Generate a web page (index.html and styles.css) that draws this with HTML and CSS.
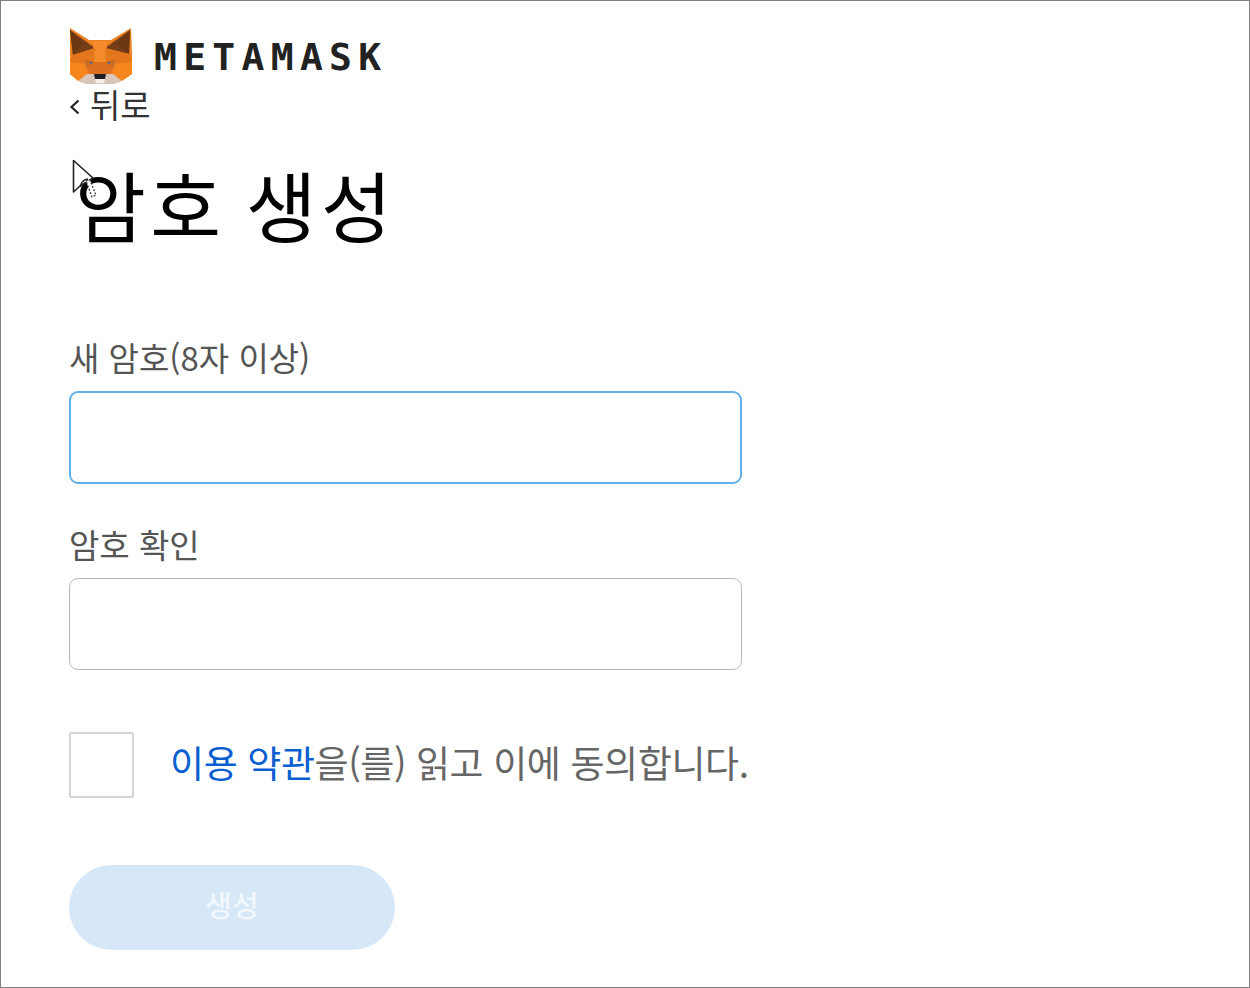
FILE: index.html
```html
<!DOCTYPE html>
<html lang="ko">
<head>
<meta charset="utf-8">
<title>MetaMask</title>
<link rel="stylesheet" href="styles.css">
</head>
<body>
<div class="page">
  <header class="brand">
    <svg class="fox" viewBox="0 0 64 56" aria-hidden="true">
      <polygon points="1,0 20,12 42,12 62,0 63,26 63,46 52,53 44,56 18,56 10,53 1,46 1,26" fill="#ec8023"/>
      <polygon points="1,2 26,20 4,27" fill="#763d16"/>
      <polygon points="61,2 36,20 60,26" fill="#763d16"/>
      <polygon points="1,2 14,15 4,27" fill="#6b3712"/>
      <polygon points="61,2 48,15 60,26" fill="#6b3712"/>
      <polygon points="24,13 38,13 37,34 25,34" fill="#f48c2b"/>
      <polygon points="4,27 26,20 25,34 15,36 1,34" fill="#e4761b"/>
      <polygon points="60,26 36,20 37,34 47,36 63,34" fill="#e4761b"/>
      <polygon points="1,34 15,36 18,46 9,53 1,46" fill="#f6851b"/>
      <polygon points="63,34 47,36 44,46 53,53 63,46" fill="#f6851b"/>
      <polygon points="15,31 25,34 24,40 18,40" fill="#c86a24"/>
      <polygon points="47,31 37,34 38,40 44,40" fill="#c86a24"/>
      <polygon points="20,34 26,35 23,37" fill="#3f6d92"/>
      <polygon points="42,34 36,35 39,37" fill="#3f6d92"/>
      <polygon points="18,40 25,34 37,34 44,40 41,47 21,47" fill="#dc6f1d"/>
      <polygon points="9,53 18,46 44,46 53,53 44,56 18,56" fill="#d9c6b6"/>
      <polygon points="25,46 37,46 36,51 26,51" fill="#1f1f25"/>
      <polygon points="26,51 36,51 35,55 27,55" fill="#f4efe9"/>
    </svg>
    <span class="wordmark">METAMASK</span>
  </header>
  <a class="back" href="#"><svg class="chev" viewBox="0 0 11 18" aria-hidden="true"><path d="M9.500 2.500 L2.500 9 L9.500 15.500" fill="none" stroke="#222" stroke-width="2.200"/></svg><span>뒤로</span></a>
  <h1 class="title">암호 생성</h1>
  <form class="form">
    <label class="field">
      <span class="field-label">새 암호(8자 이상)</span>
      <span class="input input-focus"></span>
    </label>
    <label class="field">
      <span class="field-label">암호 확인</span>
      <span class="input"></span>
    </label>
    <div class="terms">
      <span class="check"></span>
      <span class="terms-text"><a href="#">이용 약관</a>을(를) 읽고 이에 동의합니다.</span>
    </div>
    <div class="submit">생성</div>
  </form>
  <svg class="cursor" viewBox="0 0 36 48" aria-hidden="true">
    <path d="M1.500 1.500 L1.500 33 L8 27 L21 19 Z" fill="#fff" stroke="#222" stroke-width="1.600" stroke-linejoin="round"/>
    <path d="M8.500 28 A 8 8 0 0 1 16 20" fill="none" stroke="#222" stroke-width="1.400"/>
    <path d="M14 22 L18 21 L24 36 L20 38 Z" fill="#fff" stroke="#333" stroke-width="1.200" stroke-dasharray="2 1.500"/>
  </svg>
</div>
</body>
</html>
```
FILE: styles.css
```css
* { box-sizing: border-box; }
html, body { margin: 0; padding: 0; background: #fff; }
body { font-family: "Noto Sans CJK KR", "Noto Sans", sans-serif; }
.page {
  position: relative;
  width: 1250px;
  height: 988px;
  border: 1px solid #808080;
  padding: 27px 0 0 68px;
  overflow: hidden;
}
.brand { display: flex; align-items: center; gap: 21px; height: 56px; }
.fox { width: 64px; height: 56px; flex: none; }
.wordmark {
  font-family: "DejaVu Sans Mono", monospace;
  font-size: 38px;
  font-weight: 700;
  letter-spacing: 6.300px;
  line-height: 56px;
  color: #222;
  margin-top: 1px;
}
.back {
  display: flex;
  align-items: center;
  gap: 10px;
  color: #333;
  font-size: 33px;
  line-height: 44px;
  height: 44px;
  margin-top: -2px;
  text-decoration: none;
}
.chev { width: 11px; height: 18px; flex: none; margin-top: 6px; }
.title {
  margin: 32px 0 0 6px;
  font-size: 77px;
  font-weight: 400;
  line-height: 92px;
  letter-spacing: 4.500px;
  word-spacing: -6px;
  color: #000;
}
.form { display: flex; flex-direction: column; margin-top: 84px; }
.field { display: flex; flex-direction: column; margin-bottom: 37px; }
.field:last-of-type { margin-bottom: 25px; }
.field-label { font-size: 33px; line-height: 46px; color: #555; margin-bottom: 11px; }
.input {
  display: block;
  width: 673px;
  height: 92px;
  border: 1px solid #b9b9b9;
  border-radius: 9px;
  background: #fff;
}
.input-focus { border: 2px solid #62b0ea; height: 93px; }
.terms { display: flex; align-items: flex-start; height: 66px; margin-top: 37px; }
.check {
  width: 65px;
  height: 66px;
  flex: none;
  border: 2px solid #d4d4d4;
  border-radius: 2px;
}
.terms-text { margin-left: 36px; font-size: 37px; line-height: 60px; color: #666; white-space: nowrap; letter-spacing: -0.400px; }
.terms-text a { color: #0a5fd0; text-decoration: none; }
.submit {
  margin-top: 67px;
  width: 326px;
  height: 85px;
  border-radius: 43px;
  background: #d6e8f8;
  color: #f1f7fc;
  font-size: 29px;
  font-weight: 500;
  padding-bottom: 8px;
  display: flex;
  align-items: center;
  justify-content: center;
}
.cursor { position: absolute; left: 71px; top: 158px; width: 36px; height: 48px; }
```
